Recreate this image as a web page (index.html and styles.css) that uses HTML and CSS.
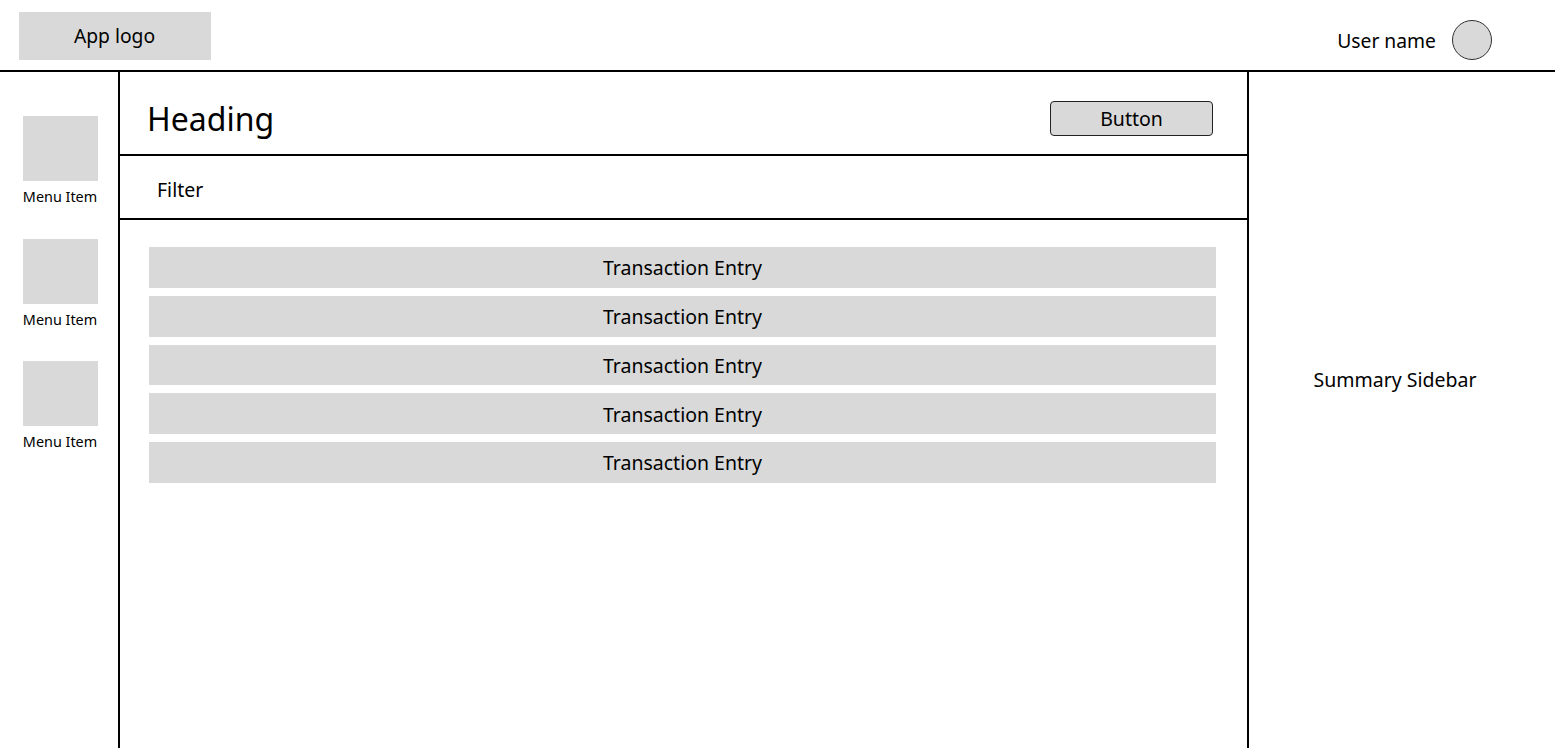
FILE: index.html
```html
<!DOCTYPE html>
<html>
<head>
<meta charset="utf-8">
<link rel="stylesheet" href="styles.css">
</head>
<body>
<header class="topbar">
  <div class="logo">App logo</div>
  <div class="user">
    <span class="user-name">User name</span>
    <span class="avatar"></span>
  </div>
</header>
<div class="layout">
  <nav class="nav">
    <div class="nav-item"><div class="nav-icon"></div><div class="nav-label">Menu Item</div></div>
    <div class="nav-item"><div class="nav-icon"></div><div class="nav-label">Menu Item</div></div>
    <div class="nav-item"><div class="nav-icon"></div><div class="nav-label">Menu Item</div></div>
  </nav>
  <main class="main">
    <div class="main-head">
      <h1 class="heading">Heading</h1>
      <button class="btn">Button</button>
    </div>
    <div class="filter">Filter</div>
    <div class="list">
      <div class="entry">Transaction Entry</div>
      <div class="entry">Transaction Entry</div>
      <div class="entry">Transaction Entry</div>
      <div class="entry">Transaction Entry</div>
      <div class="entry">Transaction Entry</div>
    </div>
  </main>
  <aside class="summary">Summary Sidebar</aside>
</div>
</body>
</html>
```
FILE: styles.css
```css
* { box-sizing: border-box; }
html, body { margin: 0; padding: 0; height: 100%; }
body {
  font-family: "Noto Sans", "Open Sans", sans-serif;
  color: #000;
  background: #fff;
  overflow: hidden;
}
.topbar {
  height: 72px;
  border-bottom: 2px solid #000;
  display: flex;
  justify-content: space-between;
  align-items: flex-start;
  padding: 12px 63px 0 19px;
}
.logo {
  width: 192px;
  height: 48px;
  background: #d9d9d9;
  display: flex;
  align-items: center;
  justify-content: center;
  font-size: 19.3px;
  padding: 0 1px 2px 0;
}
.user {
  display: flex;
  align-items: center;
  gap: 16px;
  margin-top: 8px;
}
.user-name { font-size: 19.3px; }
.avatar {
  width: 40px;
  height: 40px;
  border-radius: 50%;
  background: #d9d9d9;
  border: 1px solid #333;
}
.layout {
  display: flex;
  height: calc(100vh - 72px);
}
.nav {
  width: 120px;
  border-right: 2px solid #000;
  padding-top: 44px;
  display: flex;
  flex-direction: column;
  align-items: center;
  gap: 31.5px;
}
.nav-item {
  display: flex;
  flex-direction: column;
  align-items: center;
  margin-left: 2px;
}
.nav-icon {
  width: 75px;
  height: 65px;
  background: #d9d9d9;
}
.nav-label {
  font-size: 14.4px;
  margin-top: 6px;
  line-height: 20px;
}
.main {
  width: 1129px;
  border-right: 2px solid #000;
  display: flex;
  flex-direction: column;
}
.main-head {
  height: 84px;
  border-bottom: 2px solid #000;
  display: flex;
  align-items: center;
  justify-content: space-between;
  padding: 12px 34px 0 27px;
}
.heading {
  margin: 0;
  font-size: 32px;
  font-weight: 400;
  line-height: 44px;
}
.btn {
  width: 163px;
  height: 35px;
  background: #d9d9d9;
  border: 1.5px solid #222;
  border-radius: 4px;
  font-family: inherit;
  font-size: 19.5px;
  color: #000;
  padding: 0;
  margin-top: -2px;
}
.filter {
  height: 64px;
  border-bottom: 2px solid #000;
  display: flex;
  align-items: center;
  padding: 4px 0 0 37px;
  font-size: 19.5px;
}
.list {
  padding: 27px 31px 0 29px;
  display: flex;
  flex-direction: column;
  gap: 8px;
}
.entry {
  height: 40.75px;
  background: #d9d9d9;
  display: flex;
  align-items: center;
  justify-content: center;
  font-size: 19.5px;
  padding-top: 1px;
}
.summary {
  flex: 1;
  display: flex;
  align-items: center;
  justify-content: center;
  font-size: 19.5px;
  padding-bottom: 62px;
  padding-right: 14px;
}
```
